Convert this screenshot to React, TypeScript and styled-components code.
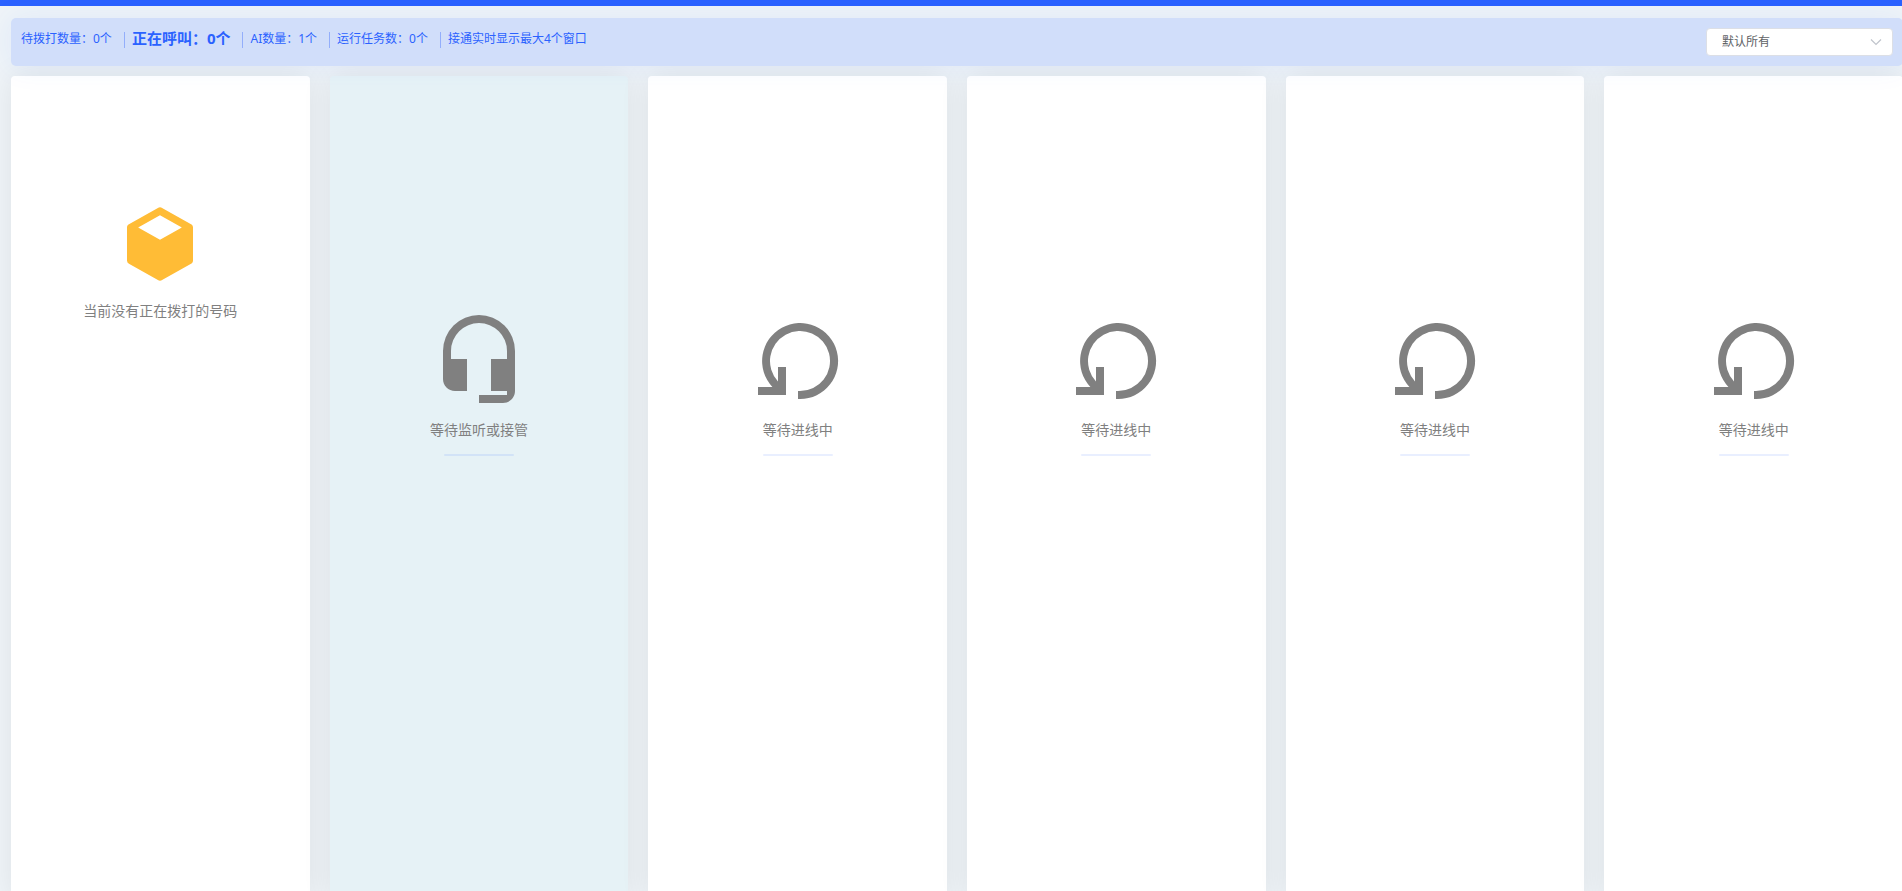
import React from "react";
import styled, { createGlobalStyle } from "styled-components";

const GlobalStyle = createGlobalStyle`
  *, *::before, *::after { box-sizing: border-box; }
  html, body, #root { height: 100%; }
  body {
    margin: 0;
    overflow: hidden;
    background: #eff4f8;
    font-family: "Noto Sans", "Noto Sans CJK SC", sans-serif;
    font-size: 14px;
    color: #808080;
  }
`;

const Page = styled.div`
  display: flex;
  flex-direction: column;
  gap: 10px;
  min-height: 100%;
  margin-right: -1px;
  padding: 12px 0 0 11px;
  border-top: 6px solid #2b62ff;
`;

const StatusBar = styled.header`
  position: relative;
  z-index: 1;
  display: flex;
  align-items: flex-start;
  justify-content: space-between;
  height: 48px;
  padding: 10px 10px 0;
  border-radius: 5px;
  background: #d1defa;
  box-shadow: 0 0 30px rgba(43, 98, 255, 0.08);
`;

const Stats = styled.ul`
  display: flex;
  margin: 0;
  padding: 0;
  list-style: none;
  color: #2b62ff;
`;

const Stat = styled.li<{ $strong?: boolean }>`
  display: flex;
  font-size: ${(p) => (p.$strong ? 15 : 12)}px;
  font-weight: ${(p) => (p.$strong ? 700 : 400)};
  line-height: ${(p) => (p.$strong ? 20 : 22)}px;
  white-space: nowrap;

  &:not(:first-child)::before {
    content: "";
    width: 1px;
    height: 16px;
    margin: 4px 7px 0 12px;
    background: #93aefb;
  }
`;

const SelectBox = styled.div`
  position: relative;
  width: 187px;
`;

const Select = styled.select`
  appearance: none;
  display: block;
  width: 100%;
  height: 28px;
  padding: 0 30px 1px 15px;
  border: 1px solid #dcdfe6;
  border-radius: 4px;
  background: #fff;
  color: #606266;
  font-family: inherit;
  font-size: 12px;
`;

const Chevron = styled.svg`
  position: absolute;
  top: 8px;
  right: 11px;
  width: 12px;
  height: 12px;
  pointer-events: none;
`;

const Board = styled.main`
  display: grid;
  grid-template-columns: repeat(6, minmax(0, 1fr));
  gap: 20px;
  min-height: calc(100vh - 68px);
`;

const Card = styled.section<{ $active?: boolean; $top: number }>`
  display: flex;
  flex-direction: column;
  align-items: center;
  padding-top: ${(p) => p.$top}px;
  border-radius: 4px;
  background: ${(p) => (p.$active ? "#e6f2f6" : "#fff")};
  box-shadow: 0 0 30px rgba(0, 0, 0, 0.08);
`;

const Icon = styled.svg<{ $size: number; $color: string }>`
  width: ${(p) => p.$size}px;
  height: ${(p) => p.$size}px;
  fill: ${(p) => p.$color};
`;

const Caption = styled.p`
  margin: 12px 0 0;
  font-size: 14px;
  line-height: 22px;
`;

const Rule = styled.div`
  width: 70px;
  height: 2px;
  margin-top: 13px;
  border-radius: 1px;
  background: rgba(43, 98, 255, 0.1);
`;

const CUBE =
  "M21 16.5c0 .38-.21.71-.53.88l-7.9 4.44c-.16.12-.36.18-.57.18s-.41-.06-.57-.18l-7.9-4.44A.99.99 0 0 1 3 16.5v-9c0-.38.21-.71.53-.88l7.9-4.44c.16-.12.36-.18.57-.18s.41.06.57.18l7.9 4.44c.32.17.53.5.53.88v9M12 4.15 6.04 7.5 12 10.85l5.96-3.35L12 4.15z";
const HEADSET =
  "M12 1a9 9 0 0 0-9 9v7c0 1.66 1.34 3 3 3h3v-8H5v-2a7 7 0 0 1 14 0v2h-4v8h4v1h-7v2h6c1.66 0 3-1.34 3-3V10a9 9 0 0 0-9-9z";
const RESTORE =
  "M2 21h7v-7H7v3.6A7.5 7.5 0 1 1 12.5 20H12v2h.5A9.5 9.5 0 1 0 5.6 19H2z";

const stats = [
  { text: "待拨打数量：0个" },
  { text: "正在呼叫：0个", strong: true },
  { text: "AI数量：1个" },
  { text: "运行任务数：0个" },
  { text: "接通实时显示最大4个窗口" },
];

const slots = [
  { icon: HEADSET, text: "等待监听或接管", active: true },
  { icon: RESTORE, text: "等待进线中" },
  { icon: RESTORE, text: "等待进线中" },
  { icon: RESTORE, text: "等待进线中" },
  { icon: RESTORE, text: "等待进线中" },
];

export default function App() {
  return (
    <>
      <GlobalStyle />
      <Page>
        <StatusBar>
          <Stats>
            {stats.map((s) => (
              <Stat key={s.text} $strong={s.strong}>
                {s.text}
              </Stat>
            ))}
          </Stats>
          <SelectBox>
            <Select aria-label="任务" defaultValue="all">
              <option value="all">默认所有</option>
            </Select>
            <Chevron viewBox="0 0 12 12" aria-hidden="true">
              <path d="M1 3.5 6 8.500l5-5" fill="none" stroke="#c0c4cc" strokeWidth="1.2" />
            </Chevron>
          </SelectBox>
        </StatusBar>
        <Board>
          <Card $top={124}>
            <Icon viewBox="0 0 24 24" $size={88} $color="#ffbc36" aria-hidden="true">
              <path d={CUBE} />
            </Icon>
            <Caption>当前没有正在拨打的号码</Caption>
          </Card>
          {slots.map((slot, i) => (
            <Card key={i} $active={slot.active} $top={235}>
              <Icon viewBox="0 0 24 24" $size={96} $color="#808080" aria-hidden="true">
                <path d={slot.icon} />
              </Icon>
              <Caption>{slot.text}</Caption>
              <Rule />
            </Card>
          ))}
        </Board>
      </Page>
    </>
  );
}
